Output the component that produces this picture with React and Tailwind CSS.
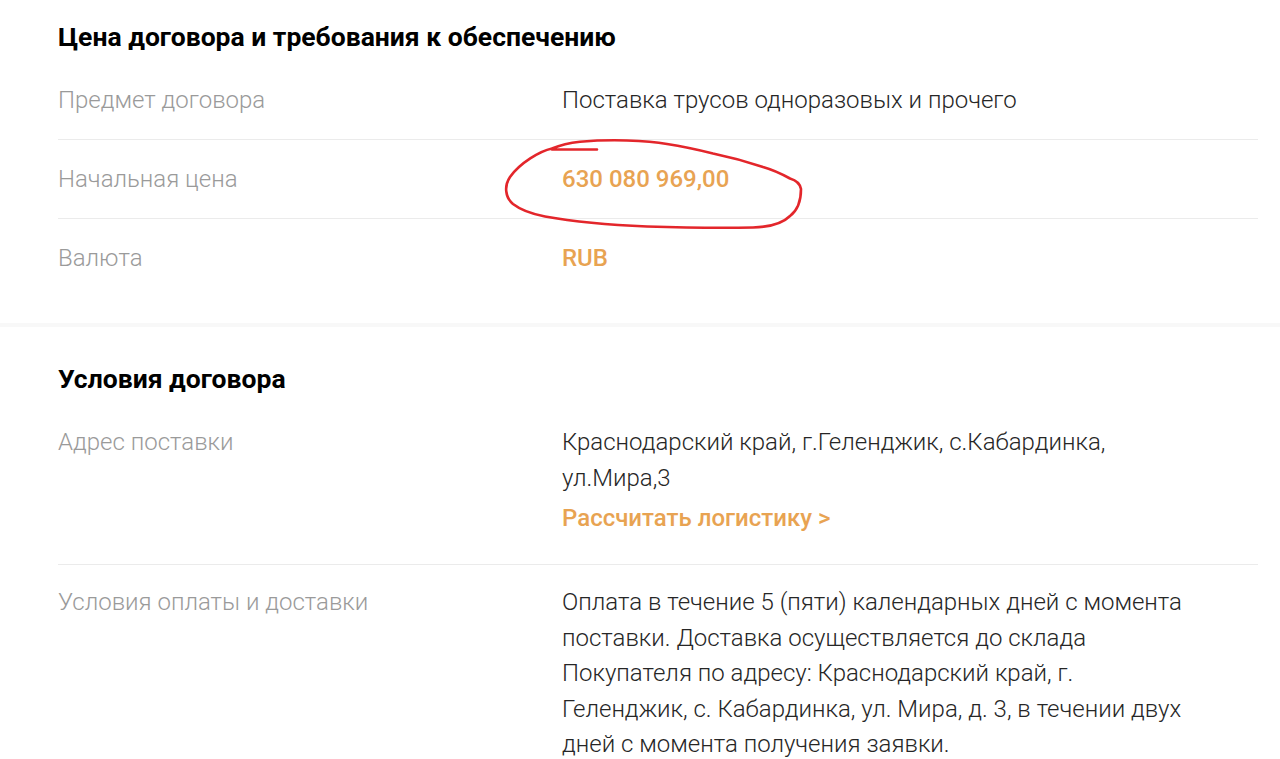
const font = { fontFamily: 'Roboto, "Noto Sans", sans-serif' };

const Row = ({ label, children, last, className = '' }) => (
  <div className={`flex ${last ? '' : 'border-b border-[#ebebeb]'} ${className}`}>
    <div className="w-[504px] shrink-0 text-[24px] leading-[36px] font-light text-[#9a9a9a]">{label}</div>
    <div className="w-[628px] text-[24px] leading-[36px] font-light text-[#262626]">{children}</div>
  </div>
);

const Accent = ({ children, className = '' }) => (
  <span className={`font-medium text-[#e8a352] ${className}`}>{children}</span>
);

const App = () => {
  return (
    <div className="relative min-h-[759px] bg-white overflow-hidden" style={font}>
      {/* Цена договора */}
      <section className="pl-[58px] pr-[22px] pt-[21px] pb-[26px]">
        <h2 className="text-[26.5px] leading-[32px] font-bold text-black mb-[8px]">
          Цена договора и требования к обеспечению
        </h2>
        <Row label="Предмет договора" className="py-[21px]">
          Поставка трусов одноразовых и прочего
        </Row>
        <Row label="Начальная цена" className="py-[21px]">
          <Accent>630 080 969,00</Accent>
        </Row>
        <Row label="Валюта" className="pt-[21px] pb-[21px]" last>
          <Accent>RUB</Accent>
        </Row>
      </section>

      <div className="h-[4px] bg-[#f8f8f8]" />

      {/* Условия договора */}
      <section className="pl-[58px] pr-[22px] pt-[36px]">
        <h2 className="text-[26.5px] leading-[32px] font-bold text-black mb-[8px]">
          Условия договора
        </h2>
        <Row label="Адрес поставки" className="pt-[21px] pb-[28px]">
          <p>Краснодарский край, г.Геленджик, с.Кабардинка, ул.Мира,3</p>
          <p className="mt-[4px]">
            <Accent>Рассчитать логистику &gt;</Accent>
          </p>
        </Row>
        <Row label="Условия оплаты и доставки" className="pt-[20px] pb-[21px] [&>div]:leading-[35.5px]" last>
          Оплата в течение 5 (пяти) календарных дней с момента поставки. Доставка осуществляется до склада
          Покупателя по адресу: Краснодарский край, г. Геленджик, с. Кабардинка, ул. Мира, д. 3, в течении двух
          дней с момента получения заявки.
        </Row>
      </section>

      {/* red marker annotation */}
      <svg
        className="absolute left-0 top-0 pointer-events-none"
        width="1280"
        height="759"
        viewBox="0 0 1280 759"
        fill="none"
      >
        <path
          d="M597 149.5 L552 149.5 M552 148.5 C540 151 520 163 510 177 C504 186 505 197 513 204 C522 211 532 214 545 216.5 C570 221 610 225 647 226.5 C680 227.5 720 228 753 227.5 C772 227 784 222 790 216 C798 210 801 199 801 189 C800 183 795 180 790 178.5 C780 173 770 169 763 167 C745 161 730 157 713 153.5 C695 149 680 146 667 144 C655 142 640 141 627 140.5 C610 140 595 140.5 580 141.7 C568 143 558 146 552 148.5"
          stroke="#e3262b"
          strokeWidth="2.6"
          strokeLinecap="round"
          strokeLinejoin="round"
        />
      </svg>
    </div>
  );
};

export default App;
